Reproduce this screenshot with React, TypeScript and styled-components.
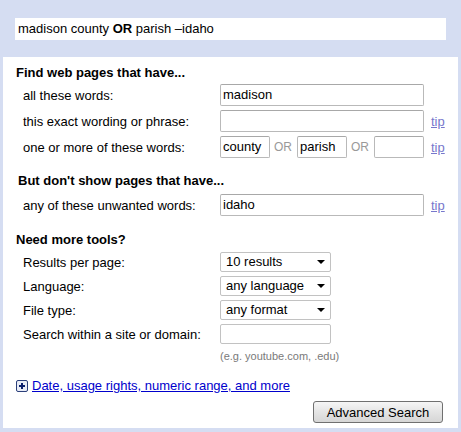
import React from 'react';
import styled, { createGlobalStyle } from 'styled-components';

const GlobalStyle = createGlobalStyle`
    html, body {
        margin: 0;
        padding: 0;
        background: #d5ddf2;
        font-family: "Liberation Sans", Arial, sans-serif;
        font-size: 13px;
        color: #000;
    }
`

const Page = styled.div`
    width: 461px;
    height: 432px;
    padding: 18px 3px 0;
    box-sizing: border-box;
`

const QueryBox = styled.div`
    height: 22px;
    margin: 0 12px 17px;
    padding: 0 3px;
    background: #fff;
    line-height: 22px;
    font-size: 13px;
`

const Panel = styled.div`
    height: 371px;
    background: #fff;
    padding: 8px 0 0;
    box-sizing: border-box;
`

const Heading = styled.div<{ $indent?: number; $top?: number }>`
    font-weight: bold;
    font-size: 13px;
    line-height: 16px;
    padding-left: ${p => p.$indent ?? 13}px;
    margin-top: ${p => p.$top ?? 0}px;
`

const Rows = styled.div<{ $gap: number; $top: number }>`
    display: flex;
    flex-direction: column;
    gap: ${p => p.$gap}px;
    margin-top: ${p => p.$top}px;
`

const Row = styled.div<{ $height: number }>`
    display: flex;
    align-items: center;
    height: ${p => p.$height}px;
`

const Label = styled.div`
    width: 197px;
    padding-left: 20px;
    flex: none;
`

const TextField = styled.div<{ $width: number }>`
    width: ${p => p.$width}px;
    height: 22px;
    box-sizing: border-box;
    border: 1px solid #b9b9b9;
    border-top-color: #a8a8a8;
    border-radius: 2px;
    padding: 0 2px;
    line-height: 20px;
    background: #fff;
    flex: none;
    overflow: hidden;
    white-space: nowrap;
`

const Or = styled.span`
    width: 27px;
    box-sizing: border-box;
    color: #999;
    font-size: 12px;
    padding-left: 4px;
    flex: none;
`

const Tip = styled.a`
    color: #7777cc;
    text-decoration: underline;
    margin-left: 7px;
    font-size: 13px;
`

const Select = styled.div`
    width: 111px;
    height: 20px;
    box-sizing: border-box;
    border: 1px solid #c2c2c2;
    border-radius: 2px;
    padding: 0 0 0 5px;
    display: flex;
    align-items: center;
    justify-content: space-between;
    line-height: 18px;
`

const Arrow = styled.span`
    width: 0;
    height: 0;
    margin-right: 5px;
    border-left: 4px solid transparent;
    border-right: 4px solid transparent;
    border-top: 4px solid #000;
`

const SiteField = styled.div`
    width: 111px;
    height: 20px;
    box-sizing: border-box;
    border: 1px solid #c2c2c2;
    border-radius: 2px;
`

const Hint = styled.div`
    color: #7a7a7a;
    font-size: 11px;
    line-height: 14px;
    margin: 5px 0 0 217px;
`

const MoreLink = styled.div`
    display: flex;
    align-items: center;
    gap: 4px;
    padding-left: 13px;
    margin-top: 15px;
    line-height: 16px;
    a {
        color: #0000cc;
        text-decoration: underline;
    }
`

const ButtonRow = styled.div`
    display: flex;
    justify-content: flex-end;
    padding-right: 15px;
    margin-top: 7px;
`

const Button = styled.button`
    width: 130px;
    height: 22px;
    font-family: "Liberation Sans", Arial, sans-serif;
    font-size: 13px;
    color: #000;
    border: 1px solid #707070;
    border-radius: 3px;
    background: linear-gradient(#f6f6f6, #e4e4e4 50%, #d6d6d6);
    padding: 0;
`

const PlusIcon = () => (
    <svg width="12" height="12" viewBox="0 0 12 12">
        <rect x="0.5" y="0.5" width="11" height="11" rx="1.5" fill="#e8ecf6" stroke="#2b3f7a" />
        <path d="M3 6h6M6 3v6" stroke="#0a1f6b" strokeWidth="2" />
    </svg>
)

const App: React.FC = () => {
    return (
        <Page>
            <GlobalStyle />
            <QueryBox>madison county <b>OR</b> parish –idaho</QueryBox>
            <Panel>
                <Heading>Find web pages that have...</Heading>
                <Rows $gap={4} $top={3}>
                    <Row $height={22}>
                        <Label>all these words:</Label>
                        <TextField $width={204}>madison</TextField>
                    </Row>
                    <Row $height={22}>
                        <Label>this exact wording or phrase:</Label>
                        <TextField $width={204} />
                        <Tip>tip</Tip>
                    </Row>
                    <Row $height={22}>
                        <Label>one or more of these words:</Label>
                        <TextField $width={50}>county</TextField>
                        <Or>OR</Or>
                        <TextField $width={50}>parish</TextField>
                        <Or>OR</Or>
                        <TextField $width={50} />
                        <Tip>tip</Tip>
                    </Row>
                </Rows>
                <Heading $indent={15} $top={15}>But don't show pages that have...</Heading>
                <Rows $gap={4} $top={5}>
                    <Row $height={22}>
                        <Label>any of these unwanted words:</Label>
                        <TextField $width={204}>idaho</TextField>
                        <Tip>tip</Tip>
                    </Row>
                </Rows>
                <Heading $top={16}>Need more tools?</Heading>
                <Rows $gap={4} $top={4}>
                    <Row $height={20}>
                        <Label>Results per page:</Label>
                        <Select>10 results<Arrow /></Select>
                    </Row>
                    <Row $height={20}>
                        <Label>Language:</Label>
                        <Select>any language<Arrow /></Select>
                    </Row>
                    <Row $height={20}>
                        <Label>File type:</Label>
                        <Select>any format<Arrow /></Select>
                    </Row>
                    <Row $height={20}>
                        <Label>Search within a site or domain:</Label>
                        <SiteField />
                    </Row>
                </Rows>
                <Hint>(e.g. youtube.com, .edu)</Hint>
                <MoreLink>
                    <PlusIcon />
                    <a>Date, usage rights, numeric range, and more</a>
                </MoreLink>
                <ButtonRow>
                    <Button>Advanced Search</Button>
                </ButtonRow>
            </Panel>
        </Page>
    )
}

export default App;
